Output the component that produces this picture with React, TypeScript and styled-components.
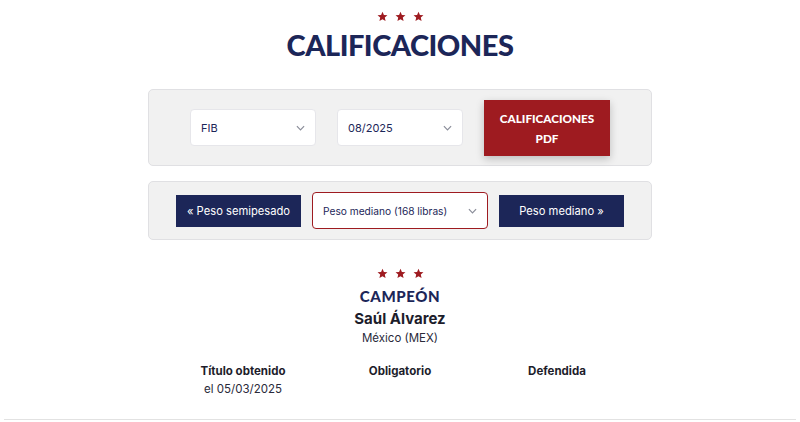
import React from "react";
import styled, { createGlobalStyle } from "styled-components";

const Global = createGlobalStyle`
  html, body { margin: 0; padding: 0; background: #fff; }
  body { font-family: Inter, "Liberation Sans", sans-serif; color: #1d1d2b; }
  * { box-sizing: border-box; }
`;

const NAVY = "#1c2658";
const RED = "#9e1b20";

const Page = styled.div`
  width: 800px;
  height: 422px;
  display: flex;
  flex-direction: column;
  align-items: center;
  padding-top: 10px;
  overflow: hidden;
`;

const Stars = styled.div`
  display: flex;
  gap: 7px;
  justify-content: center;
  color: ${RED};
  height: 13px;
  align-items: center;
`;

const Title = styled.h1`
  margin: 5px 0 0;
  font-family: Lato, "Open Sans", sans-serif;
  font-weight: 900;
  font-size: 29px;
  line-height: 34px;
  color: ${NAVY};
  letter-spacing: -0.5px;
`;

const Panel = styled.div<{ $mt: number; $h: number }>`
  width: 504px;
  height: ${(p) => p.$h}px;
  margin-top: ${(p) => p.$mt}px;
  background: #f1f1f1;
  border: 1px solid #e0e0e3;
  border-radius: 5px;
  display: flex;
  align-items: center;
  justify-content: center;
`;

const Row = styled.div<{ $gap: number }>`
  display: flex;
  align-items: center;
  gap: ${(p) => p.$gap}px;
`;

const SelectBox = styled.div<{ $w: number; $h: number; $accent?: boolean }>`
  width: ${(p) => p.$w}px;
  height: ${(p) => p.$h}px;
  background: #fff;
  border: 1px solid ${(p) => (p.$accent ? RED : "#e6e6ea")};
  border-radius: 4px;
  display: flex;
  align-items: center;
  justify-content: space-between;
  padding: 0 10px 0 10px;
  font-size: ${(p) => (p.$accent ? 10.2 : 11)}px;
  color: ${NAVY};
`;

const PdfButton = styled.div`
  width: 126px;
  height: 56px;
  background: ${RED};
  color: #fff;
  font-family: Lato, "Open Sans", sans-serif;
  font-weight: 900;
  font-size: 11.7px;
  line-height: 20px;
  text-align: center;
  display: flex;
  align-items: center;
  justify-content: center;
  box-shadow: 0 3px 8px rgba(0, 0, 0, 0.22);
`;

const NavButton = styled.div`
  width: 125px;
  height: 32px;
  background: ${NAVY};
  color: #fff;
  font-size: 11.2px;
  display: flex;
  align-items: center;
  justify-content: center;
`;

const Champion = styled.div`
  margin-top: 27px;
  display: flex;
  flex-direction: column;
  align-items: center;
`;

const Label = styled.div`
  margin-top: 6px;
  font-family: Lato, "Open Sans", sans-serif;
  font-weight: 900;
  font-size: 15px;
  line-height: 20px;
  color: ${NAVY};
  letter-spacing: 0.6px;
`;

const Name = styled.div`
  margin-top: 3px;
  font-weight: 700;
  font-size: 15px;
  line-height: 20px;
  color: #1d1d2b;
`;

const Country = styled.div`
  margin-top: 2px;
  font-size: 11.5px;
  line-height: 14px;
  color: #2a2a3a;
`;

const Cols = styled.div`
  margin-top: 18px;
  display: grid;
  grid-template-columns: repeat(3, 157px);
  width: 471px;
`;

const Col = styled.div`
  display: flex;
  flex-direction: column;
  align-items: center;
`;

const ColHead = styled.div`
  font-weight: 700;
  font-size: 11.5px;
  line-height: 16px;
  color: #1d1d2b;
`;

const ColVal = styled.div`
  font-size: 11.5px;
  line-height: 20px;
  color: #2a2a3a;
`;

const Rule = styled.div`
  margin-top: auto;
  margin-bottom: 2px;
  width: 792px;
  height: 1px;
  background: #e2e2e2;
`;

const Star = () => (
  <svg width="11" height="11" viewBox="0 0 24 24">
    <path
      fill="currentColor"
      d="M12 1.5l3.1 7.1 7.7.7-5.8 5.1 1.7 7.6L12 18l-6.7 4 1.7-7.6-5.8-5.1 7.7-.7z"
    />
  </svg>
);

const StarRow = () => (
  <Stars>
    <Star />
    <Star />
    <Star />
  </Stars>
);

const Chevron = () => (
  <svg width="9" height="6" viewBox="0 0 10 6">
    <path d="M1 1l4 4 4-4" fill="none" stroke="#8a8d99" strokeWidth="1.3" />
  </svg>
);

export default function App() {
  return (
    <>
      <Global />
      <Page>
        <StarRow />
        <Title>CALIFICACIONES</Title>
        <Panel $mt={27} $h={77}>
          <Row $gap={21}>
            <SelectBox $w={126} $h={37}>
              FIB <Chevron />
            </SelectBox>
            <SelectBox $w={126} $h={37}>
              08/2025 <Chevron />
            </SelectBox>
            <PdfButton>
              CALIFICACIONES
              <br />
              PDF
            </PdfButton>
          </Row>
        </Panel>
        <Panel $mt={15} $h={59}>
          <Row $gap={11}>
            <NavButton>« Peso semipesado</NavButton>
            <SelectBox $w={176} $h={37} $accent>
              Peso mediano (168 libras) <Chevron />
            </SelectBox>
            <NavButton>Peso mediano »</NavButton>
          </Row>
        </Panel>
        <Champion>
          <StarRow />
          <Label>CAMPEÓN</Label>
          <Name>Saúl Álvarez</Name>
          <Country>México (MEX)</Country>
          <Cols>
            <Col>
              <ColHead>Título obtenido</ColHead>
              <ColVal>el 05/03/2025</ColVal>
            </Col>
            <Col>
              <ColHead>Obligatorio</ColHead>
            </Col>
            <Col>
              <ColHead>Defendida</ColHead>
            </Col>
          </Cols>
        </Champion>
        <Rule />
      </Page>
    </>
  );
}
